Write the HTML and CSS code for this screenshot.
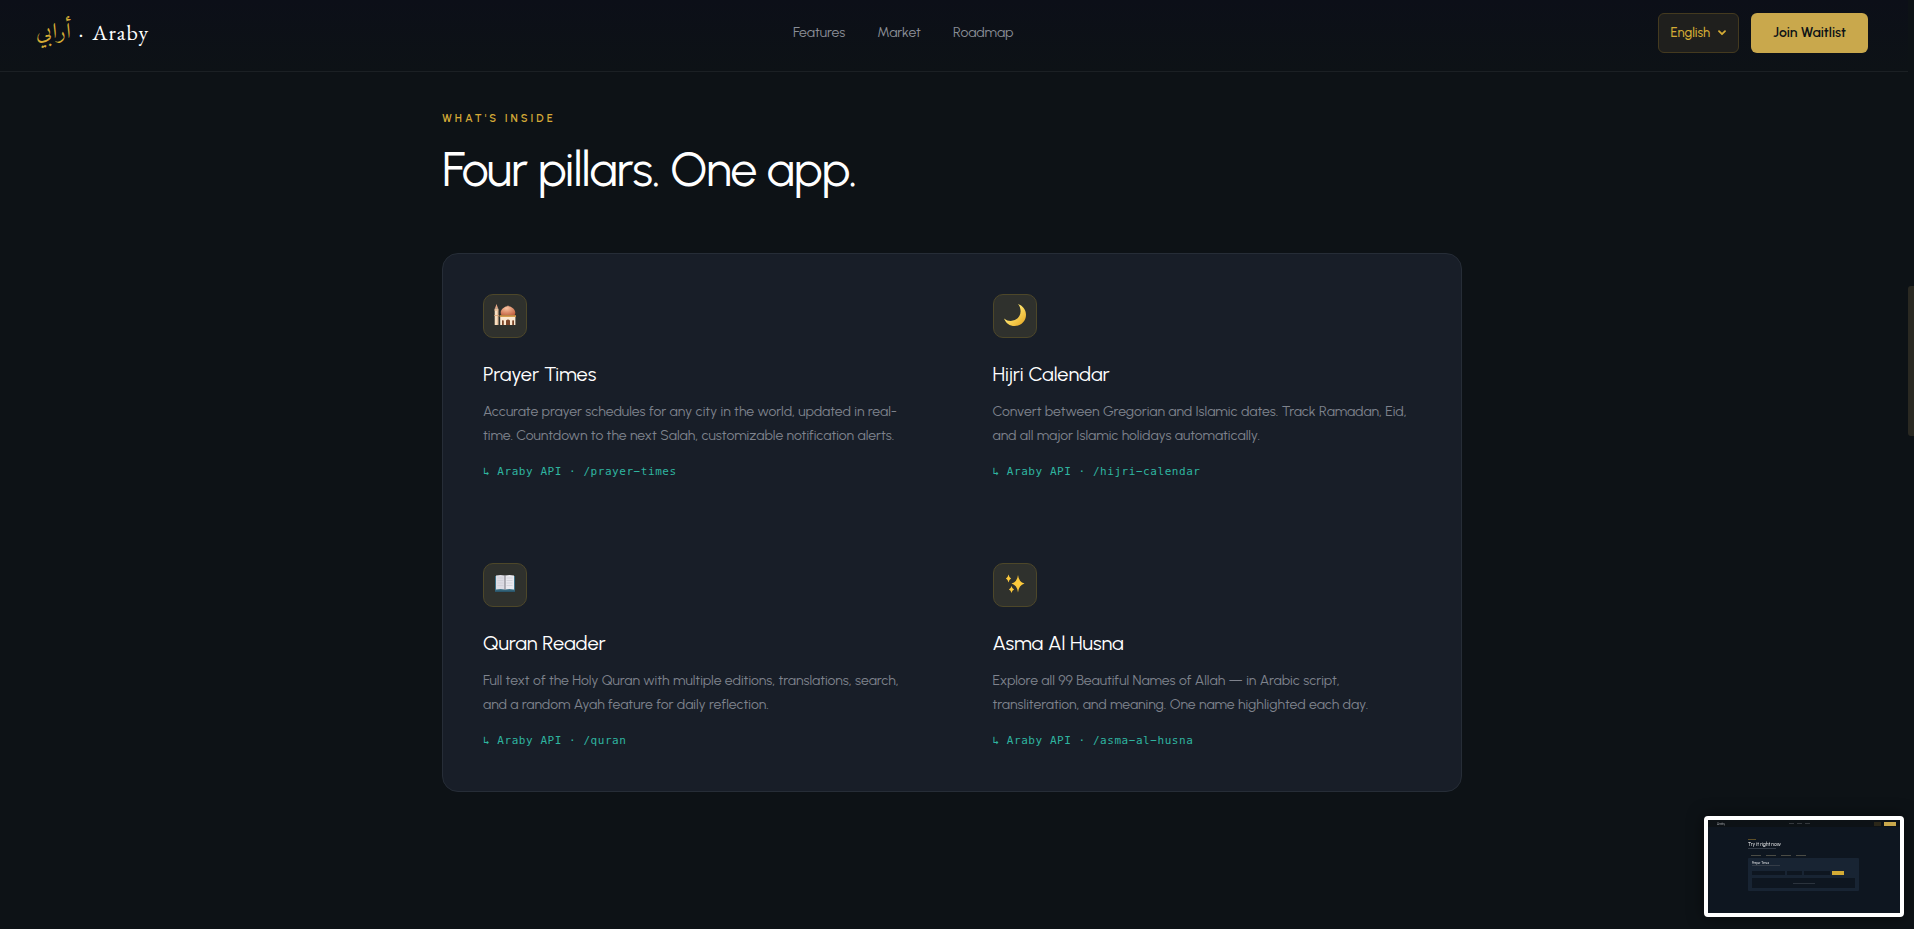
FILE: index.html
```html
<!DOCTYPE html>
<html lang="en">
<head>
    <meta charset="UTF-8">
    <meta name="viewport" content="width=device-width, initial-scale=1.0">
    <title>Araby</title>
    <link rel="stylesheet" href="styles.css">
</head>
<body>

    <header class="navbar">
        <a href="#" class="logo"><span class="logo-ar" lang="ar" dir="rtl">أرابي</span><span>·</span><span>Araby</span></a>

        <nav class="nav-links">
            <a href="#features">Features</a>
            <a href="#market">Market</a>
            <a href="#roadmap">Roadmap</a>
        </nav>

        <div class="nav-actions">
            <button type="button" class="lang-button">
                English
                <svg width="8" height="6" viewBox="0 0 8 6" aria-hidden="true">
                    <path d="M1 1.2l3 3 3-3" fill="none" stroke="currentColor" stroke-width="1.8" stroke-linecap="round" stroke-linejoin="round"/>
                </svg>
            </button>
            <button type="button" class="join-button">Join Waitlist</button>
        </div>
    </header>

    <main class="features" id="features">
        <p class="section-label">What's Inside</p>
        <h1 class="section-title">Four pillars. One app.</h1>

        <div class="features-grid">
            <article class="feature">
                <div class="feature-icon">
                    <!-- Mosque -->
                    <svg width="22" height="22" viewBox="0 0 22 22" aria-hidden="true">
                        <defs>
                            <radialGradient id="dome" cx="0.4" cy="0.3" r="0.8">
                                <stop offset="0" stop-color="#f9c3a0"/>
                                <stop offset="1" stop-color="#c2603f"/>
                            </radialGradient>
                        </defs>
                        <path d="M2.500 0l1.600 4.500H.9z" fill="#e3a585"/>
                        <path d="M.7 4.500h3.600V21H.7z" fill="#f8dfc0"/>
                        <path d="M.3 5.600h4.400v1H.3zM.3 11h4.400v1H.3z" fill="#dcab80"/>
                        <path d="M3.500 6.800h.8V21h-.8z" fill="#d3a37e"/>
                        <path d="M14 1.200l.7 1.100c4.200.7 6.600 3.700 6.600 6.500 0 .9-.3 1.700-.8 2.400H7.500c-.5-.7-.8-1.500-.8-2.400 0-2.800 2.400-5.800 6.600-6.500z" fill="url(#dome)"/>
                        <path d="M5.600 11.200h16.400v1.800H5.600z" fill="#d49a4c"/>
                        <path d="M6.200 13h15.200V21H6.200z" fill="#fbe8d0"/>
                        <path d="M8 21v-4q.9-1.800 1.800 0V21zM12 21v-4.500q2-2.200 4 0V21zM18.200 21v-4q.9-1.800 1.800 0V21z" fill="#7a452a"/>
                    </svg>
                </div>
                <h2>Prayer Times</h2>
                <p class="feature-text">Accurate prayer schedules for any city in the world, updated in real-time. Countdown to the next Salah, customizable notification alerts.</p>
                <p class="feature-api">↳ Araby API · /prayer−times</p>
            </article>

            <article class="feature">
                <div class="feature-icon">
                    <!-- Crescent moon -->
                    <svg width="22" height="22" viewBox="0 0 22 22" aria-hidden="true">
                        <defs>
                            <linearGradient id="moon" x1="0" y1="0" x2="1" y2="1">
                                <stop offset="0.4" stop-color="#ffe36b"/>
                                <stop offset="1" stop-color="#e3a21c"/>
                            </linearGradient>
                        </defs>
                        <path d="M14 0c4.500 1.500 8 5.500 8 10.700C22 17 17 22 10.700 22 5.800 22 1.600 18.900 0 14.400c2 1.700 4.300 2.500 6.800 2.500 5.600 0 9.800-4.300 9.800-9.700C16.600 4.600 15.700 2 14 0z" fill="url(#moon)"/>
                    </svg>
                </div>
                <h2>Hijri Calendar</h2>
                <p class="feature-text">Convert between Gregorian and Islamic dates. Track Ramadan, Eid, and all major Islamic holidays automatically.</p>
                <p class="feature-api">↳ Araby API · /hijri−calendar</p>
            </article>

            <article class="feature">
                <div class="feature-icon">
                    <!-- Open book -->
                    <svg width="22" height="22" viewBox="0 0 22 22" aria-hidden="true">
                        <path d="M1 3h20v16H1z" fill="#3d7186"/>
                        <path d="M1 17.500h20V19H1z" fill="#2b566b"/>
                        <path d="M2 2.500Q6.500 1.500 11 2.500V16.500Q6.500 15.500 2 16.500z" fill="#dddce4"/>
                        <path d="M20 2.500Q15.500 1.500 11 2.500V16.500Q15.500 15.500 20 16.500z" fill="#e9e8ee"/>
                        <path d="M11 2.500v14" stroke="#77767f" stroke-width="1"/>
                        <path d="M3.500 5h6M3.500 7.500h6M3.500 10h6M3.500 12.500h6M12.500 5h6M12.500 7.500h6M12.500 10h6M12.500 12.500h6" stroke="#cccbd4" stroke-width="0.700"/>
                    </svg>
                </div>
                <h2>Quran Reader</h2>
                <p class="feature-text">Full text of the Holy Quran with multiple editions, translations, search, and a random Ayah feature for daily reflection.</p>
                <p class="feature-api">↳ Araby API · /quran</p>
            </article>

            <article class="feature">
                <div class="feature-icon">
                    <!-- Sparkles -->
                    <svg width="22" height="22" viewBox="0 0 22 22" aria-hidden="true">
                        <g fill="#fcc93c">
                            <path d="M14 2q.8 7 6.500 8.500Q14.800 12 14 19.500 13.200 12 7.500 10.500 13.200 9 14 2z"/>
                            <path d="M4.500 1.500q.6 3 2.600 4-2 1-2.600 4-.6-3-2.600-4 2-1 2.600-4z"/>
                            <path d="M7.500 13q.6 2.600 2.600 3.500-2 .9-2.600 3.500-.6-2.600-2.600-3.500 2-.9 2.600-3.500z"/>
                        </g>
                    </svg>
                </div>
                <h2>Asma Al Husna</h2>
                <p class="feature-text">Explore all 99 Beautiful Names of Allah — in Arabic script, transliteration, and meaning. One name highlighted each day.</p>
                <p class="feature-api">↳ Araby API · /asma−al−husna</p>
            </article>
        </div>
    </main>

    <div class="scroll-thumb"></div>

    <!-- Small preview of the next section -->
    <aside class="preview">
        <div class="preview-nav">
            <span class="preview-logo">Araby</span>
            <span class="preview-links"><i></i><i></i><i></i></span>
            <span class="preview-buttons"><i></i><b></b></span>
        </div>
        <div class="preview-body">
            <div class="preview-label"></div>
            <div class="preview-title">Try it right now</div>
            <div class="preview-sub"></div>
            <div class="preview-tabs"><i></i><i></i><i></i><i></i></div>
            <div class="preview-card">
                <div class="preview-heading">Prayer Times</div>
                <div class="preview-sub"></div>
                <div class="preview-form"><i></i><i></i><i></i><b></b></div>
                <div class="preview-result"><i></i></div>
            </div>
        </div>
    </aside>

</body>
</html>
```
FILE: styles.css
```css
* {
    box-sizing: border-box;
}

body {
    margin: 0;
    padding-right: 10px;
    min-height: 100vh;
    background: #0d1216;
    color: #ffffff;
    font-family: 'Urbanist', 'Lato', sans-serif;
    font-weight: 400;
    overflow: hidden;
}

h1, h2, p {
    margin: 0;
    font-weight: 400;
}

a {
    color: inherit;
    text-decoration: none;
}

button {
    font-family: inherit;
    cursor: pointer;
}

/* Navbar */
.navbar {
    display: flex;
    justify-content: space-between;
    align-items: center;
    height: 72px;
    margin-right: -4px;
    padding: 0 40px 6px 36px;
    background: linear-gradient(#0c0f18, #0d1216);
    border-bottom: 1px solid #1b2024;
}

.logo {
    display: flex;
    align-items: center;
    gap: 8px;
    font-family: 'EB Garamond', 'Liberation Serif', serif;
    font-size: 22px;
    letter-spacing: 1px;
}

.logo-ar {
    color: #d4ab35;
    font-family: 'Amiri', 'DejaVu Sans', sans-serif;
    letter-spacing: 0;
}

.nav-links {
    display: flex;
    gap: 32px;
    color: #8a8e96;
    font-size: 14px;
}

.nav-actions {
    display: flex;
    align-items: center;
    gap: 12px;
}

.lang-button {
    display: flex;
    align-items: center;
    gap: 8px;
    height: 40px;
    padding: 0 12px;
    background: #1f1f1d;
    border: 1px solid #443a1f;
    border-radius: 6px;
    color: #d4ab35;
    font-size: 13px;
    font-weight: 500;
}

.join-button {
    height: 40px;
    padding: 0 22px;
    background: #c9a84c;
    border: none;
    border-radius: 6px;
    color: #0d1216;
    font-size: 14px;
    font-weight: 600;
}

/* Features */
.features {
    max-width: 1020px;
    margin: 0 auto;
    padding-top: 39px;
}

.section-label {
    color: #d4a937;
    font-size: 11px;
    font-weight: 600;
    line-height: 16px;
    letter-spacing: 3px;
    text-transform: uppercase;
}

.section-title {
    margin: 15px 0 56px;
    font-size: 48px;
    line-height: 55px;
    letter-spacing: -0.02em;
}

.features-grid {
    display: grid;
    grid-template-columns: 1fr 1fr;
    gap: 1px;
    background: #181e28;
    border: 1px solid #262d37;
    border-radius: 16px;
}

.feature {
    padding: 40px;
}

.feature-icon {
    display: flex;
    align-items: center;
    justify-content: center;
    width: 44px;
    height: 44px;
    margin-bottom: 24px;
    padding-bottom: 2px;
    background: #2f312d;
    border: 1px solid #4d4729;
    border-radius: 10px;
}

.feature h2 {
    margin-bottom: 14px;
    font-size: 20px;
    line-height: 24px;
}

.feature-text {
    margin-bottom: 14px;
    color: #7f838d;
    font-size: 14px;
    line-height: 24px;
}

.feature-api {
    color: #2fb5a0;
    font-family: 'DejaVu Sans Mono', monospace;
    font-size: 11px;
    line-height: 20px;
    letter-spacing: 0.05em;
}

/* Scrollbar thumb on the window edge */
.scroll-thumb {
    position: fixed;
    top: 286px;
    right: 0;
    width: 6px;
    height: 150px;
    background: #2a2922;
    border-radius: 3px 0 0 3px;
}

/* Preview window */
.preview {
    position: fixed;
    right: 10px;
    bottom: 12px;
    width: 200px;
    height: 101px;
    background: #0e1620;
    border: 4px solid #ffffff;
    border-radius: 4px;
    font-size: 4px;
    overflow: hidden;
    box-shadow: 0 0 16px rgba(0, 0, 0, 0.5);
}

.preview i, .preview b {
    display: block;
}

.preview-nav {
    display: flex;
    align-items: center;
    justify-content: space-between;
    height: 7px;
    padding: 0 4px 0 9px;
    background: #0d1216;
}

.preview-logo {
    color: #a5a8ac;
    font-size: 3px;
}

.preview-links, .preview-buttons {
    display: flex;
    gap: 3px;
}

.preview-links i {
    width: 5px;
    height: 1px;
    background: #34383d;
}

.preview-buttons i {
    width: 7px;
    height: 4px;
    background: #2b2719;
}

.preview-buttons b {
    width: 12px;
    height: 4px;
    background: #c9a84c;
}

.preview-body {
    width: 111px;
    margin: 12px auto 0 40px;
}

.preview-label {
    width: 8px;
    height: 1px;
    background: #5c4e27;
}

.preview-title {
    margin-top: 1px;
    font-size: 5px;
    line-height: 7px;
}

.preview-sub {
    width: 28px;
    height: 1px;
    background: #343c47;
}

.preview-tabs {
    display: flex;
    gap: 5px;
    margin: 6px 0 2px 3px;
}

.preview-tabs i {
    width: 10px;
    height: 1px;
    background: #4b4c45;
}

.preview-card {
    height: 33px;
    padding: 3px 4px;
    background: #182433;
    border-radius: 1px;
}

.preview-heading {
    font-size: 3px;
    line-height: 4px;
}

.preview-form {
    display: flex;
    gap: 2px;
    margin: 5px 0 3px;
}

.preview-form i {
    width: 33px;
    height: 4px;
    background: #0e1620;
}

.preview-form i:nth-child(2) {
    width: 15px;
}

.preview-form i:nth-child(3) {
    width: 26px;
}

.preview-form b {
    width: 12px;
    height: 4px;
    background: #d4ab35;
}

.preview-result {
    display: flex;
    align-items: center;
    justify-content: center;
    height: 10px;
    background: #0e1620;
}

.preview-result i {
    width: 22px;
    height: 1px;
    background: #2b333d;
}
```
